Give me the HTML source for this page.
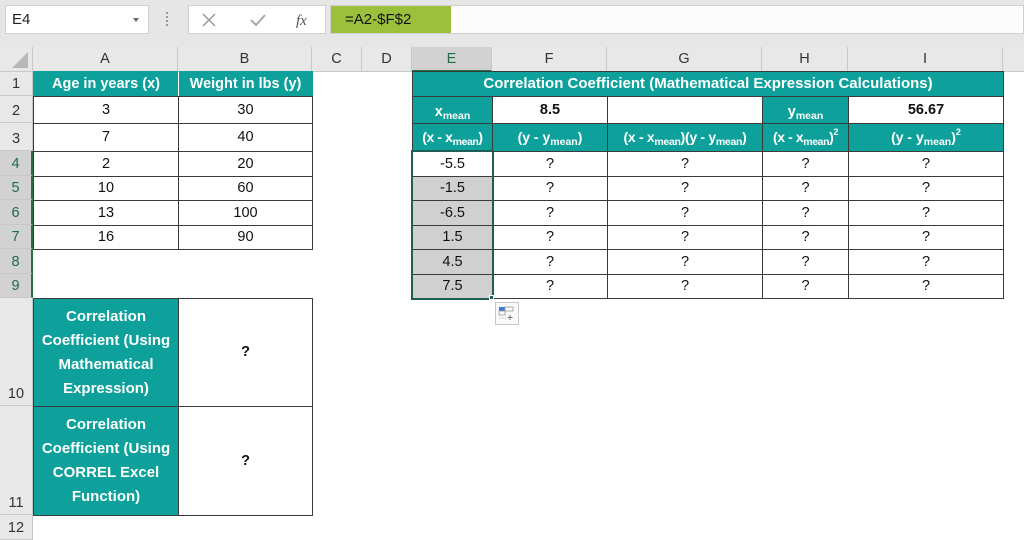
<!DOCTYPE html>
<html><head><meta charset="utf-8"><style>
*{box-sizing:border-box;margin:0;padding:0}
body{width:1024px;height:540px;overflow:hidden;background:#fff;font-family:"Liberation Sans",Arial,sans-serif;position:relative}
.a{position:absolute}
.c{position:absolute;display:flex;align-items:center;justify-content:center;text-align:center;font-size:14.5px;color:#111;border:1px solid #3a3a3a;line-height:1.15}
.t{background:#0ea19c;color:#fff;font-weight:bold}
.b{font-weight:bold}
.g{background:#d0d0d0}
.ch{position:absolute;top:47px;height:25px;display:flex;align-items:center;justify-content:center;font-size:14.5px;color:#333;border-right:1px solid #c8c8c8;background:#e8e8e8;border-bottom:1px solid #c8c8c8}
.rh{position:absolute;left:0;width:33px;display:flex;align-items:flex-end;justify-content:center;font-size:14.5px;color:#333;background:#e8e8e8;border-bottom:1px solid #c8c8c8;border-right:1px solid #c8c8c8;padding-bottom:3px}
sub{font-size:10.5px;vertical-align:-3px;line-height:0}
sup{font-size:9px;vertical-align:7px;line-height:0}
</style></head><body>
<div class="a" style="left:0;top:0;width:1024px;height:47px;background:#e6e6e6"></div>
<div class="a" style="left:5px;top:5px;width:144px;height:29px;background:#fff;border:1px solid #d0d0d0;font-size:15px;padding:5px 0 0 6px;color:#222">E4</div>
<div class="a" style="left:133px;top:18px;width:0;height:0;border-left:3.5px solid transparent;border-right:3.5px solid transparent;border-top:4px solid #666"></div>
<div class="a" style="left:166px;top:12px;width:2px;height:14px;border-left:2px dotted #999"></div>
<div class="a" style="left:188px;top:5px;width:138px;height:29px;background:#fff;border:1px solid #d0d0d0"></div>
<svg class="a" style="left:200px;top:11px" width="120" height="18"><path d="M3 3L15 15M15 3L3 15" stroke="#999" stroke-width="1.5"/><path d="M51 9l5 5 9-10" stroke="#aaa" stroke-width="2" fill="none"/><text x="96" y="14" font-family="Liberation Serif" font-style="italic" font-size="15" fill="#555">fx</text></svg>
<div class="a" style="left:330px;top:5px;width:694px;height:29px;background:#fcfcfc;border:1px solid #d0d0d0"></div>
<div class="a" style="left:331px;top:6px;width:120px;height:27px;background:#9bc03c;font-size:15px;padding:5px 0 0 14px;color:#111">=A2-$F$2</div>
<div class="a" style="left:0;top:47px;width:1024px;height:25px;background:#e8e8e8;border-bottom:1px solid #c8c8c8"></div>
<div class="ch" style="left:0;width:33px"><svg width="33" height="25"><path d="M28 5L28 21L12 21Z" fill="#b8b8b8"/></svg></div>
<div class="ch" style="left:33px;width:145px">A</div>
<div class="ch" style="left:178px;width:134px">B</div>
<div class="ch" style="left:312px;width:50px">C</div>
<div class="ch" style="left:362px;width:50px">D</div>
<div class="ch" style="left:412px;width:80px;background:#d2d2d2;color:#1f6b45;border-bottom:2px solid #217346">E</div>
<div class="ch" style="left:492px;width:115px">F</div>
<div class="ch" style="left:607px;width:155px">G</div>
<div class="ch" style="left:762px;width:86px">H</div>
<div class="ch" style="left:848px;width:155px">I</div>
<div class="rh" style="top:72px;height:24px">1</div>
<div class="rh" style="top:96px;height:27px">2</div>
<div class="rh" style="top:123px;height:28px">3</div>
<div class="rh" style="top:151px;height:25px;background:#d2d2d2;color:#1f6b45;border-right:2px solid #217346">4</div>
<div class="rh" style="top:176px;height:24px;background:#d2d2d2;color:#1f6b45;border-right:2px solid #217346">5</div>
<div class="rh" style="top:200px;height:25px;background:#d2d2d2;color:#1f6b45;border-right:2px solid #217346">6</div>
<div class="rh" style="top:225px;height:24px;background:#d2d2d2;color:#1f6b45;border-right:2px solid #217346">7</div>
<div class="rh" style="top:249px;height:25px;background:#d2d2d2;color:#1f6b45;border-right:2px solid #217346">8</div>
<div class="rh" style="top:274px;height:24px;background:#d2d2d2;color:#1f6b45;border-right:2px solid #217346">9</div>
<div class="rh" style="top:298px;height:108px">10</div>
<div class="rh" style="top:406px;height:109px">11</div>
<div class="rh" style="top:515px;height:25px">12</div>
<div class="c t" style="left:33px;top:71px;width:146px;height:26px;border-color:#0ea19c">Age in years (x)</div>
<div class="c t" style="left:178px;top:71px;width:135px;height:26px;border-color:#0ea19c #0ea19c #0ea19c #fff">Weight in lbs (y)</div>
<div class="c" style="left:33px;top:96px;width:146px;height:28px">3</div><div class="c" style="left:178px;top:96px;width:135px;height:28px">30</div>
<div class="c" style="left:33px;top:123px;width:146px;height:29px">7</div><div class="c" style="left:178px;top:123px;width:135px;height:29px">40</div>
<div class="c" style="left:33px;top:151px;width:146px;height:26px">2</div><div class="c" style="left:178px;top:151px;width:135px;height:26px">20</div>
<div class="c" style="left:33px;top:176px;width:146px;height:25px">10</div><div class="c" style="left:178px;top:176px;width:135px;height:25px">60</div>
<div class="c" style="left:33px;top:200px;width:146px;height:26px">13</div><div class="c" style="left:178px;top:200px;width:135px;height:26px">100</div>
<div class="c" style="left:33px;top:225px;width:146px;height:25px">16</div><div class="c" style="left:178px;top:225px;width:135px;height:25px">90</div>
<div class="c t" style="left:33px;top:298px;width:146px;height:109px;line-height:24px;font-size:15px">Correlation<br>Coefficient (Using<br>Mathematical<br>Expression)</div>
<div class="c b" style="left:178px;top:298px;width:135px;height:109px">?</div>
<div class="c t" style="left:33px;top:406px;width:146px;height:110px;line-height:24px;font-size:15px">Correlation<br>Coefficient (Using<br>CORREL Excel<br>Function)</div>
<div class="c b" style="left:178px;top:406px;width:135px;height:110px">?</div>
<div class="c t" style="left:412px;top:71px;width:592px;height:26px;font-size:15px">Correlation Coefficient (Mathematical Expression Calculations)</div>
<div class="c t" style="left:412px;top:96px;width:81px;height:28px;padding-top:4px"><span>x<sub>mean</sub></span></div>
<div class="c b" style="left:492px;top:96px;width:116px;height:28px">8.5</div>
<div class="c" style="left:607px;top:96px;width:156px;height:28px"></div>
<div class="c t" style="left:762px;top:96px;width:87px;height:28px;padding-top:4px"><span>y<sub>mean</sub></span></div>
<div class="c b" style="left:848px;top:96px;width:156px;height:28px">56.67</div>
<div class="c t" style="left:412px;top:123px;width:81px;height:29px;font-size:14px;white-space:nowrap;letter-spacing:-0.4px"><span>(x - x<sub>mean</sub>)</span></div>
<div class="c t" style="left:492px;top:123px;width:116px;height:29px;font-size:14px"><span>(y - y<sub>mean</sub>)</span></div>
<div class="c t" style="left:607px;top:123px;width:156px;height:29px;font-size:14px;white-space:nowrap;letter-spacing:-0.3px"><span>(x - x<sub>mean</sub>)(y - y<sub>mean</sub>)</span></div>
<div class="c t" style="left:762px;top:123px;width:87px;height:29px;font-size:14px;white-space:nowrap;letter-spacing:-0.4px"><span>(x - x<sub>mean</sub>)<sup>2</sup></span></div>
<div class="c t" style="left:848px;top:123px;width:156px;height:29px;font-size:14px"><span>(y - y<sub>mean</sub>)<sup>2</sup></span></div>
<div class="c" style="left:412px;top:151px;width:81px;height:26px">-5.5</div>
<div class="c g" style="left:412px;top:176px;width:81px;height:25px">-1.5</div>
<div class="c g" style="left:412px;top:200px;width:81px;height:26px">-6.5</div>
<div class="c g" style="left:412px;top:225px;width:81px;height:25px">1.5</div>
<div class="c g" style="left:412px;top:249px;width:81px;height:26px">4.5</div>
<div class="c g" style="left:412px;top:274px;width:81px;height:25px">7.5</div>
<div class="c" style="left:492px;top:151px;width:116px;height:26px">?</div><div class="c" style="left:607px;top:151px;width:156px;height:26px">?</div><div class="c" style="left:762px;top:151px;width:87px;height:26px">?</div><div class="c" style="left:848px;top:151px;width:156px;height:26px">?</div>
<div class="c" style="left:492px;top:176px;width:116px;height:25px">?</div><div class="c" style="left:607px;top:176px;width:156px;height:25px">?</div><div class="c" style="left:762px;top:176px;width:87px;height:25px">?</div><div class="c" style="left:848px;top:176px;width:156px;height:25px">?</div>
<div class="c" style="left:492px;top:200px;width:116px;height:26px">?</div><div class="c" style="left:607px;top:200px;width:156px;height:26px">?</div><div class="c" style="left:762px;top:200px;width:87px;height:26px">?</div><div class="c" style="left:848px;top:200px;width:156px;height:26px">?</div>
<div class="c" style="left:492px;top:225px;width:116px;height:25px">?</div><div class="c" style="left:607px;top:225px;width:156px;height:25px">?</div><div class="c" style="left:762px;top:225px;width:87px;height:25px">?</div><div class="c" style="left:848px;top:225px;width:156px;height:25px">?</div>
<div class="c" style="left:492px;top:249px;width:116px;height:26px">?</div><div class="c" style="left:607px;top:249px;width:156px;height:26px">?</div><div class="c" style="left:762px;top:249px;width:87px;height:26px">?</div><div class="c" style="left:848px;top:249px;width:156px;height:26px">?</div>
<div class="c" style="left:492px;top:274px;width:116px;height:25px">?</div><div class="c" style="left:607px;top:274px;width:156px;height:25px">?</div><div class="c" style="left:762px;top:274px;width:87px;height:25px">?</div><div class="c" style="left:848px;top:274px;width:156px;height:25px">?</div>
<div class="a" style="left:411px;top:150px;width:83px;height:150px;border:2px solid #1d5e55"></div>
<div class="a" style="left:489px;top:295px;width:5px;height:5px;background:#1d5e55;border:1px solid #fff"></div>
<div class="a" style="left:495px;top:302px;width:24px;height:23px;border:1px solid #c8c8c8;background:#fafafa"></div>
<svg class="a" style="left:497px;top:304px" width="20" height="20"><rect x="2" y="3" width="6" height="4" fill="#3b7de0"/><rect x="8" y="3" width="8" height="4" fill="none" stroke="#999" stroke-width="0.8"/><rect x="2" y="7" width="6" height="4" fill="none" stroke="#999" stroke-width="0.8"/><path d="M2 14h7" stroke="#bbb" stroke-dasharray="1 1"/><path d="M13 11v5M10.5 13.5h5" stroke="#777" stroke-width="1"/></svg>
</body></html>
